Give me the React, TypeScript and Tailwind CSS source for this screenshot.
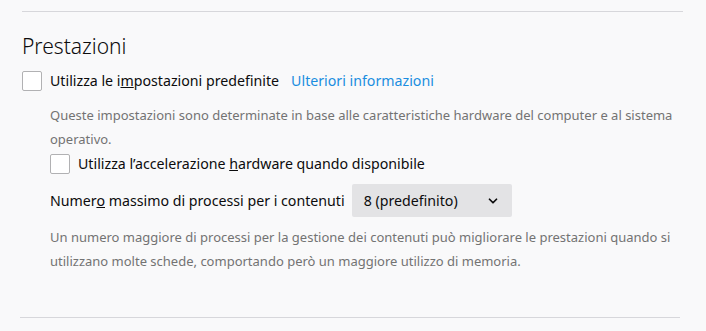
import { ChevronDown } from 'lucide-react'

function Checkbox() {
  return <span className="inline-block w-5 h-5 shrink-0 rounded-[2px] border border-[#b1b1b3] bg-white" />
}

export default function App() {
  return (
    <div
      className="w-[706px] h-[331px] overflow-hidden bg-[#f9f9fa] text-[#0c0c0d]"
      style={{ fontFamily: '"Noto Sans", "Open Sans", sans-serif' }}
    >
      <div className="pt-[11px] pl-[22px] pr-[23px]">
        <div className="h-px bg-[#d7d7db]" />
      </div>

      <div className="pl-[22px] pr-4">
        <h2 className="mt-[19px] h-[30px] text-[21px] leading-[30px] font-light">Prestazioni</h2>

        <div className="mt-[10px] flex items-center h-5 text-[14.2px]">
          <Checkbox />
          <span className="ml-[8px]">
            Utilizza le i<u>m</u>postazioni predefinite
          </span>
          <a className="ml-[12px] text-[#1b8ee0]">Ulteriori informazioni</a>
        </div>

        <div className="pl-[28px]">
          <p className="mt-[12px] text-[13px] leading-[24px] text-[#737373] pr-2">
            Queste impostazioni sono determinate in base alle caratteristiche hardware del computer e al sistema
            operativo.
          </p>

          <div className="mt-[3px] flex items-center h-5 text-[14.2px]">
            <Checkbox />
            <span className="ml-[8px]">
              Utilizza l’accelerazione <u>h</u>ardware quando disponibile
            </span>
          </div>

          <div className="mt-[10px] flex items-center text-[14.2px]">
            <span>
              Numer<u>o</u> massimo di processi per i contenuti
            </span>
            <div className="ml-[7px] w-[160px] h-[33px] rounded-[2px] bg-[#e3e3e5] flex items-center justify-between pl-3 pr-[12px]">
              <span>8 (predefinito)</span>
              <ChevronDown size={14} strokeWidth={3} />
            </div>
          </div>

          <p className="mt-[8px] text-[13px] leading-[24px] text-[#737373] pr-2">
            Un numero maggiore di processi per la gestione dei contenuti può migliorare le prestazioni quando si
            utilizzano molte schede, comportando però un maggiore utilizzo di memoria.
          </p>
        </div>
      </div>

      <div className="mt-[44px] pl-[20px] pr-[26px]">
        <div className="h-px bg-[#d7d7db]" />
      </div>
    </div>
  )
}
